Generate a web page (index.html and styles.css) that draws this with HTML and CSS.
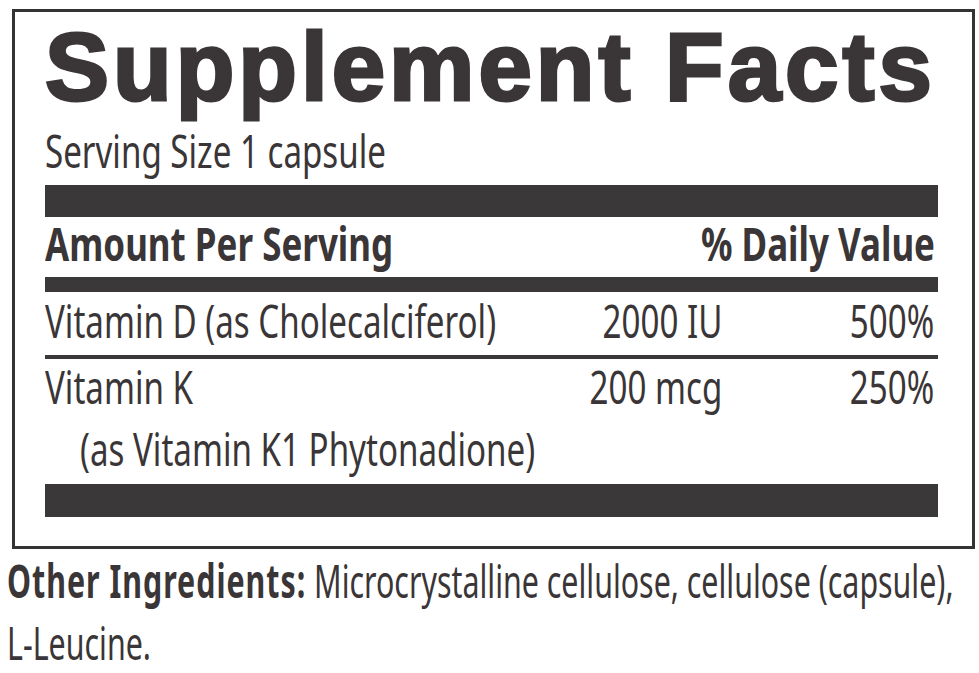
FILE: index.html
```html
<!DOCTYPE html>
<html lang="en">
<head>
    <meta charset="UTF-8">
    <meta name="viewport" content="width=device-width, initial-scale=1.0">
    <title>Supplement Facts</title>
    <link rel="stylesheet" href="styles.css">
</head>
<body>
    <div class="label">
        <h1 class="label__title">Supplement Facts</h1>
        <div class="label__line"><span class="cond">Serving Size 1 capsule</span></div>
        <div class="bar bar--thick"></div>
        <div class="row row--head">
            <span class="cond cond--b">Amount Per Serving</span>
            <span class="cond cond--b cond--r">% Daily Value</span>
        </div>
        <div class="bar bar--medium"></div>
        <div class="row">
            <div><span class="cond">Vitamin D (as Cholecalciferol)</span></div>
            <div class="row__amount"><span class="cond cond--r">2000 IU</span></div>
            <div class="row__dv"><span class="cond cond--r">500%</span></div>
        </div>
        <div class="bar bar--thin"></div>
        <div class="row row--k">
            <div><span class="cond">Vitamin K</span></div>
            <div class="row__amount"><span class="cond cond--r">200 mcg</span></div>
            <div class="row__dv"><span class="cond cond--r">250%</span></div>
        </div>
        <div class="label__line label__line--sub"><span class="cond">(as Vitamin K1 Phytonadione)</span></div>
        <div class="bar bar--thick bar--end"></div>
    </div>
    <p class="other"><b>Other Ingredients:</b> Microcrystalline cellulose, cellulose (capsule),<br>L-Leucine.</p>
</body>
</html>
```

FILE: styles.css
```css
html {
    background: #fff;
}
body {
    margin: 0;
    overflow: hidden;
    color: #3a3536;
    font-family: "Noto Sans", "Open Sans", sans-serif;
    font-size: 46px;
    line-height: 50px;
}
.cond {
    display: inline-block;
    white-space: nowrap;
    transform: scaleX(0.72);
    transform-origin: left center;
}
.cond--b {
    font-weight: 700;
    transform: scaleX(0.76);
}
.cond--r {
    transform-origin: right center;
}
.label {
    margin: 9px 4px 0 12px;
    border: 3px solid #333;
    padding: 7px 34px 29px 30px;
}
.label__title {
    margin: 0;
    font-family: "Liberation Sans", sans-serif;
    font-size: 96px;
    line-height: 96px;
    font-weight: 700;
    letter-spacing: 4px;
    -webkit-text-stroke: 3px #3a3536;
    white-space: nowrap;
}
.label__line {
    margin-top: 10px;
}
.label__line--sub {
    margin-top: 12px;
    padding-left: 35px;
}
.bar {
    background: #3a3839;
}
.bar--thick {
    height: 32px;
    margin-top: 10px;
}
.bar--medium {
    height: 15px;
    margin-top: 9px;
}
.bar--thin {
    height: 4px;
    margin-top: 10px;
}
.bar--end {
    height: 33px;
    margin-top: 11px;
}
.row {
    display: grid;
    grid-template-columns: minmax(0, 1fr) 200px 216px;
    margin-top: 3px;
}
.row--k {
    margin-top: 2px;
}
.row--head {
    display: flex;
    justify-content: space-between;
    margin-top: 1px;
    padding-right: 3px;
}
.row__amount {
    text-align: right;
}
.row__dv {
    text-align: right;
    padding-right: 4px;
}
.other {
    margin: 0 0 0 7px;
    line-height: 62px;
    white-space: nowrap;
    transform: scaleX(0.66);
    transform-origin: left top;
}
.other b {
    letter-spacing: 1.5px;
}
```
